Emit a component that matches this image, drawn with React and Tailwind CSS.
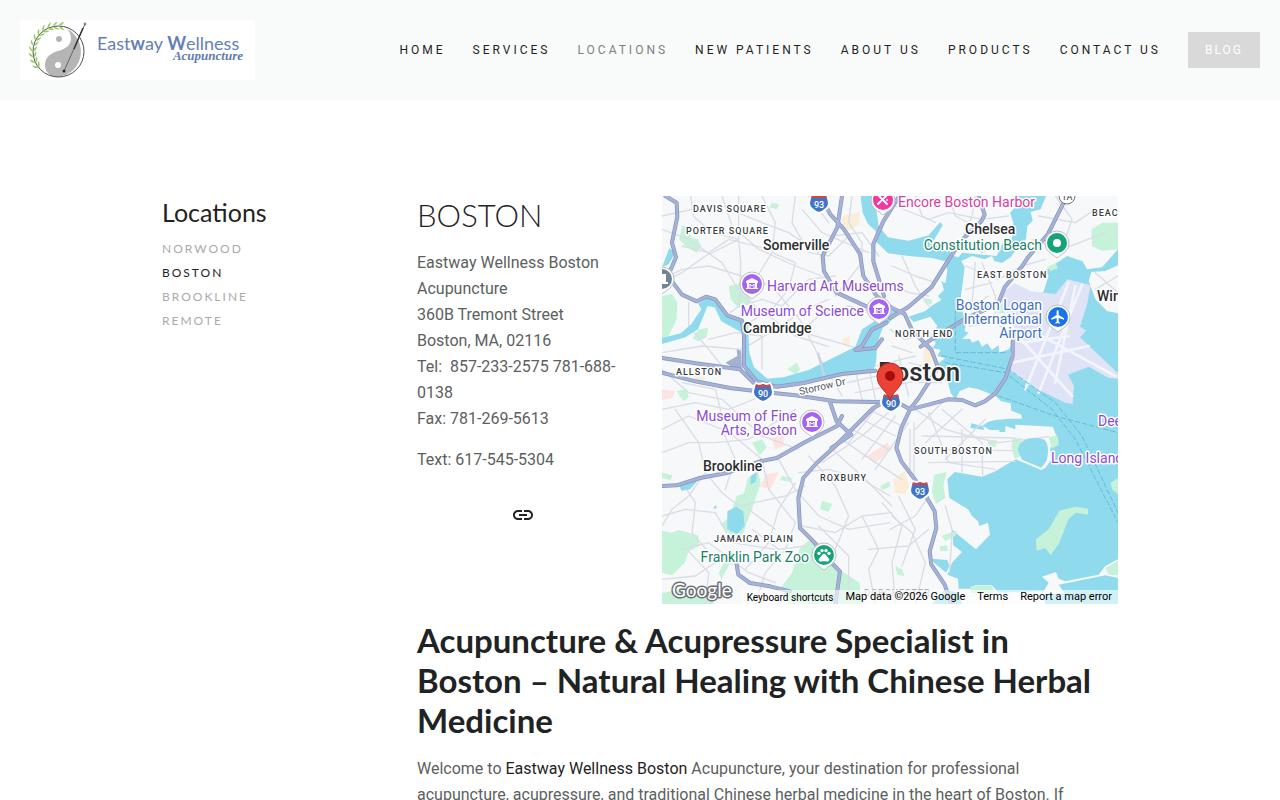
import { MdLink, MdFlight, MdPets, MdMuseum } from "react-icons/md";

const navItems = [
  "Home",
  "Services",
  "Locations",
  "New Patients",
  "About Us",
  "Products",
  "Contact Us",
];

const locations = ["Norwood", "Boston", "Brookline", "Remote"];

// The map geometry is drawn on a 1368 x 1224 grid and scaled down by three.
const land = [
  "M0 0H596L602 50 618 84 642 106 640 134 678 172 740 180 810 186 850 196 856 225 850 262 838 256 846 282 828 300 838 312 808 330 790 345 740 362 755 378 805 362 826 390 806 424 822 440 812 456 836 462 826 480 850 486 832 500 830 515 848 530 844 548 858 560 866 590 880 612 892 586 920 574 950 580 1000 600 1018 616 1046 622 1048 644 1078 656 1080 668 1040 668 1000 672 978 678 960 690 928 682 922 712 904 718 926 696 966 702 964 690 984 702 1012 702 1012 708 1030 708 1030 690 1060 700 1060 686 1172 692 1190 736 1164 756 1168 790 1150 816 1140 820 1066 788 1050 796 1000 826 960 842 878 828 856 850 862 906 918 940 930 960 948 976 952 990 978 980 984 1016 942 1060 888 1016 870 1000 874 1048 900 1068 870 1100 856 1136 888 1148 890 1178 930 1178 938 1168 990 1168 1010 1190 1140 1186 1150 1224H0Z",
  "M666 0L642 34 650 90 678 124 740 134 800 118 835 78 842 88 820 125 810 145 865 160 866 178 890 184 900 170 1004 180 1022 142 1050 126 1054 80 1044 50 1070 24 1066 0Z",
  "M1152 0L1136 40 1106 48 1112 74 1096 90 1092 130 1062 160 1046 184 1020 200 998 196 990 180 968 190 930 180 898 195 908 214 903 255 893 330 913 375 908 405 920 410 900 430 924 428 930 440 950 432 960 452 976 442 990 462 1010 448 1012 470 1040 460 1056 440 1140 300 1160 240 1150 224 1215 180 1262 196 1275 220 1320 214 1368 160V0Z",
  "M1368 208L1330 225 1288 228 1280 255 1300 310 1335 345 1368 352Z",
  "M1140 1142L1182 1128 1190 1148 1210 1156 1310 1136 1330 1110 1368 1090V1146L1330 1138 1190 1166 1210 1194H1140L1160 1160Z",
];

const airport =
  "M1010 300L1058 262 1108 286 1180 294 1216 250 1286 268 1276 322 1254 392 1272 404 1254 424 1368 532V548L1340 546 1280 512 1218 536 1236 570 1232 624 1210 620 1180 606 1118 576 1048 528 1044 474 1060 400Z";

const parks = [
  "M52 130L60 90 84 92 86 124 108 130 118 152 104 170 70 150Z",
  "M0 300L30 294 46 320 44 370 20 420 0 430Z",
  "M200 270L232 262 262 290 268 322 230 336 206 310Z",
  "M110 400L138 396 134 424 108 436 92 426Z",
  "M376 520L404 500 414 520 402 536Z",
  "M330 20L352 24 344 40 322 34Z",
  "M44 586L74 578 80 604 64 616Z",
  "M414 1056L440 1034 470 1040 500 1080 538 1124 592 1160 600 1224H380L356 1176 390 1130Z",
  "M258 846L288 826 296 862 280 910 262 960 240 1020 214 1030 190 1000 176 986 204 960 224 900 246 892Z",
  "M270 740L300 730 314 754 292 778Z",
  "M0 1004L30 1010 50 1002 108 1018 112 1050 80 1066 68 1100 30 1138 0 1130Z",
  "M170 1130L198 1080 208 1096 178 1150Z",
  "M0 1190L70 1180 150 1186 156 1224H0Z",
  "M0 830L32 838 26 852 0 846Z",
  "M360 840L392 846 384 858 354 852Z",
  "M480 914L510 924 500 948 474 940Z",
  "M654 870L682 856 684 872 660 882Z",
  "M816 836L854 828 844 870 850 906 822 924 810 890Z",
  "M1052 728L1080 726 1076 780 1058 790 1048 750Z",
  "M1160 724L1186 718 1190 746 1170 758Z",
  "M976 734L1004 732 1002 752 982 754Z",
  "M838 1020L884 1004 880 1020 850 1034Z",
  "M832 1052L854 1048 858 1064 836 1066Z",
  "M1330 1116L1368 1094V1138L1340 1136Z",
  "M1346 860L1368 846V894L1350 880Z",
  "M1122 1030L1160 1000 1192 944 1240 932 1278 938V956L1242 950 1220 968 1192 1040 1166 1078 1150 1056 1124 1064Z",
  "M1288 100L1320 80 1368 80V160L1320 164 1290 150Z",
  "M1156 214L1180 200 1188 216 1166 226Z",
  "M926 1170L990 1170 998 1190 926 1192Z",
  "M1000 320L1024 326 1030 352 1006 350Z",
  "M790 306L812 312 808 326 788 320Z",
  "M700 1110L720 1120 728 1140 706 1136Z",
];

const sand = [
  "M540 60L594 48 592 84 566 102 540 94Z",
  "M694 850L728 824 742 870 730 896 700 890Z",
  "M540 430L564 420 562 446 544 448Z",
  "M786 440L810 448 806 520 782 540Z",
  "M96 538L130 546 124 570 96 560Z",
];

const pinkBlocks = [
  "M614 780L676 740 690 760 640 800Z",
  "M330 724L366 716 364 752 338 760Z",
  "M294 872L312 834 350 828 326 880Z",
  "M0 580L40 586 30 606 0 612Z",
];

const water = [
  // Charles river and its basin
  "M0 214L22 156 40 170 20 205Z",
  "M0 426L56 412 88 384 118 340 108 322 132 308 154 310 176 330 204 362 244 372 258 386 262 470 276 514 316 548 364 544 440 522 580 452 600 400 650 368 676 348 700 340 714 350 680 380 662 396 646 440 642 500 632 530 560 530 430 566 330 580 280 566 250 530 240 410 200 388 178 376 158 334 136 330 128 352 108 400 70 424 0 444Z",
  "M196 946L222 932 244 946 248 990 226 1014 196 1000Z",
  "M266 840L284 828 282 856 266 866Z",
  "M50 866L86 850 106 856 84 880 58 884Z",
  "M1068 764C1068 730 1110 720 1144 730C1166 740 1160 800 1140 816L1080 792Z",
  "M808 1088L856 1092 862 1110 852 1130 816 1100Z",
  "M810 1224L850 1180 888 1190 900 1224Z",
  "M154 936L162 926 164 938Z",
];

const minorRoads = [
  "M86 0L94 60 150 110 230 130 236 200 232 330 204 350",
  "M0 60L90 40 180 30 300 80 380 110 470 170",
  "M0 100L80 130 180 200 240 300 400 420 500 452",
  "M180 0L210 90 290 160 400 210 480 240",
  "M230 0V130L130 180 60 230 20 250",
  "M300 0L340 80 330 170 280 250 230 300",
  "M400 0L390 80 440 170 500 180 560 120",
  "M420 40L480 110 620 170",
  "M238 330L300 310 360 330 440 250 520 240",
  "M330 170L400 200 380 280 330 340 260 380",
  "M80 320L80 390 140 460 180 510",
  "M0 250L60 220 140 210 240 240 330 270 420 380 470 480 540 600",
  "M60 150L140 170 200 130 320 160 460 140",
  "M260 400L360 390 460 420 580 455",
  "M140 430L220 410 300 420 300 520",
  "M0 470L120 450 240 460 340 400 430 340 500 310",
  "M400 420L470 360 560 330 640 350",
  "M440 0L500 80M510 120L600 110 650 180",
  "M570 0L560 80 600 140 600 200 520 300",
  "M0 520L80 590 180 610 300 720 410 760",
  "M60 560L160 580 190 700 300 790",
  "M0 640L100 620 200 640 300 600",
  "M0 700L80 660 180 700 220 790 190 880",
  "M40 640L110 740 130 830 80 900 30 940 0 990",
  "M0 770L80 740 160 740 260 730 400 640",
  "M130 830L180 890 230 930 370 900 430 870",
  "M60 860L100 920 90 1010 150 1080 230 1110",
  "M0 960L70 940 160 950 210 1040 340 1060",
  "M300 790L320 880 400 980 370 1060 310 1130 280 1224",
  "M350 790L400 880 470 960 560 1000 684 980",
  "M400 860L350 940 320 1040 250 1120",
  "M410 830L500 820 600 850 684 900",
  "M440 780L520 870 560 960 520 1060 510 1110",
  "M420 990L520 1010 600 960 690 950",
  "M480 800L600 720 690 640",
  "M510 760L600 840 690 930",
  "M540 730L640 800 720 850",
  "M570 700L680 760M600 670L700 720M620 640L720 690",
  "M560 740L640 640M600 790L700 660M640 820L740 680",
  "M470 990L560 1080 560 1224",
  "M600 960L650 1060 620 1120 640 1224",
  "M690 960L750 1010 790 1100 760 1224",
  "M620 1060L740 1050 800 1000",
  "M660 920L720 990 690 1100 700 1224",
  "M60 1060L140 1040 260 1130 340 1160",
  "M0 1150L100 1140 160 1100M80 1066L140 1130 130 1224",
  "M270 1000L350 1060 430 1050M260 940L340 1000",
  "M560 530L760 480M556 560L780 510M580 590L790 550",
  "M580 520L600 610M620 510L640 610M660 500L680 610M710 480L740 600",
  "M684 400L730 430 770 420M690 450L750 470M740 500L820 520M760 560L840 560",
  "M760 640L850 700 920 720 1010 740 1160 722",
  "M800 650L860 800 1000 820M840 640L960 740 962 838",
  "M780 720L1060 726M790 760L1052 764M800 800L1060 796M900 700V830",
  "M760 700L840 620M790 740L900 640M850 790L970 670",
  "M744 700V840M756 680V840",
  "M850 930L870 1000 868 1050 862 1130",
  "M690 210L760 240 820 260M680 260L740 290 800 300M720 180L760 270 800 330",
  "M700 30L800 70 860 50 960 70 1040 60",
  "M760 0L780 60 820 80M860 0L880 60 960 100 1040 110M940 0L930 60 890 160",
  "M900 130L960 170 1010 140M1130 60L1240 80 1300 40 1368 60",
  "M1180 0L1230 70 1200 160M1110 130L1200 160 1330 110",
  "M910 210L1010 250 1080 210 1150 190M960 200L1000 300 1000 360",
  "M910 280L990 260M910 340L980 300M940 200L930 330M920 390L1000 380 1040 410",
  "M1300 230L1368 290M1300 280L1368 240",
  "M684 1000L760 960 800 900M710 900L760 1000 720 1110",
];

const highways = [
  "M10 0L44 20 46 62 30 140 42 184 18 240 60 296 104 316 132 302 160 310 196 358 240 374 246 420 246 510 284 556 344 572 420 562 540 534 640 524",
  "M0 486L116 504 234 520 274 560",
  "M0 530L100 556 204 576 306 588 400 598 520 616 640 618 700 616 744 640 800 626 858 610 900 612 940 628 968 616 1000 592 1030 548 1052 480 1052 436",
  "M474 0L506 56 546 100 594 174 604 240 644 300 690 336 728 354 750 402 808 462 828 514 802 556 770 606 744 640 718 696 703 756 718 796 778 876 818 946 823 996 803 1066 808 1106 848 1166 868 1224",
  "M540 0L526 94 482 180 486 226 524 290 640 344",
  "M712 0L664 76 634 144 634 196 666 300",
  "M950 0L968 56 958 76 898 134 858 194 808 274 738 334 684 366",
  "M1208 14L1158 114 1098 184 1078 214 1028 274 1008 324 918 364 818 424 776 452",
  "M0 870L44 868 114 846 194 831 294 796 344 786 434 736 524 691 540 660",
  "M690 606L634 636 554 716 514 756 464 801 424 846 409 906 414 996 454 1036 514 1106 534 1126 520 1224",
  "M504 618L524 676 568 716 508 756",
  "M224 1106L229 1136 264 1161 324 1171 384 1186",
  "M674 380L630 400 600 450 580 462 640 456 660 430",
];

const runways = [
  "M1220 260L1090 580",
  "M1260 266L1130 590",
  "M1060 410L1230 600",
  "M1240 270L1180 560",
  "M1050 500L1280 450",
  "M1140 420L1360 540",
  "M1080 440L1220 420",
];

const districts = [
  ["DAVIS SQUARE", 31, 16],
  ["PORTER SQUARE", 24, 38],
  ["ALLSTON", 14, 179],
  ["NORTH END", 233, 141],
  ["EAST BOSTON", 315, 82],
  ["BEACHMONT", 430, 20],
  ["SOUTH BOSTON", 252, 258],
  ["ROXBURY", 158, 285],
  ["JAMAICA PLAIN", 52, 346],
];

const towns = [
  ["Somerville", 101, 54],
  ["Cambridge", 81, 137],
  ["Chelsea", 303, 38],
  ["Winthrop", 435, 105],
  ["Brookline", 41, 275],
];

const purple = "#8a4bd3";
const places = [
  { text: "Harvard Art Museums", x: 105, y: 95, color: purple },
  { text: "Museum of Science", x: 202, y: 120, color: purple, end: true },
  { text: "Museum of Fine", x: 135, y: 225, color: purple, end: true },
  { text: "Arts, Boston", x: 135, y: 239, color: purple, end: true },
  { text: "Deer Island", x: 436, y: 230, color: purple },
  { text: "Long Island", x: 389, y: 267, color: purple },
  { text: "Encore Boston Harbor", x: 236, y: 11, color: "#d6409f" },
  { text: "Constitution Beach", x: 380, y: 54, color: "#188064", end: true },
  { text: "Franklin Park Zoo", x: 147, y: 366, color: "#188064", end: true },
  { text: "Boston Logan", x: 380, y: 114, color: "#3f6fc4", end: true },
  { text: "International", x: 380, y: 128, color: "#3f6fc4", end: true },
  { text: "Airport", x: 380, y: 142, color: "#3f6fc4", end: true },
];

function Lines({ paths, color, width, dash }) {
  return paths.map((d) => (
    <path
      key={d}
      d={d}
      fill="none"
      stroke={color}
      strokeWidth={width}
      strokeDasharray={dash}
      strokeLinejoin="round"
      strokeLinecap="round"
    />
  ));
}

function Areas({ paths, color }) {
  return paths.map((d) => <path key={d} d={d} fill={color} />);
}

function Pin({ x, y, color, children }) {
  return (
    <g transform={`translate(${x} ${y})`}>
      <path
        d="M0 15C-3 12 -12 9 -12 0A12 12 0 0 1 12 0C12 9 3 12 0 15Z"
        fill="#fff"
        stroke="#b9bec8"
        strokeWidth="1"
      />
      <circle r="10" fill={color} />
      {children}
    </g>
  );
}

function MuseumPin({ x, y }) {
  return (
    <Pin x={x} y={y} color="#a463f2">
      <path
        d="M0 -6L6 -3V-1H-6V-3ZM-5 -1H-3V4H-5ZM3 -1H5V4H3ZM-6 4H6V5H-6Z"
        fill="#fff"
      />
      <path d="M-2 4V0L0 2L2 0V4" stroke="#fff" strokeWidth="1" fill="none" />
    </Pin>
  );
}

function Shield({ x, y, number }) {
  return (
    <g transform={`translate(${x} ${y})`}>
      <path
        d="M-7 -9Q-4 -7 0 -9Q4 -7 7 -9Q13 2 7 6Q4 9 0 10Q-4 9 -7 6Q-13 2 -7 -9Z"
        fill="#3f74c6"
        stroke="#fff"
        strokeWidth="2"
      />
      <path d="M-7 -8Q-4 -6 0 -8Q4 -6 7 -8L8 -5H-8Z" fill="#d8453e" />
      <text y="5" fontSize="9" fontWeight="500" fill="#fff" textAnchor="middle">
        {number}
      </text>
    </g>
  );
}

function MapDrawing() {
  return (
    <svg
      viewBox="0 0 456 408"
      preserveAspectRatio="xMidYMid slice"
      className="block h-full w-full font-['Roboto',sans-serif]"
      role="img"
      aria-label="Map of Boston"
    >
      <g transform="scale(0.333333)">
        <rect width="1368" height="1224" fill="#90daee" />
        <Areas paths={land} color="#f7f8f9" />
        <Areas paths={[airport]} color="#dfe3f5" />
        <Areas paths={sand} color="#fbeed9" />
        <Areas paths={pinkBlocks} color="#fce4e2" />
        <Areas paths={parks} color="#c5f2d8" />
        <Lines paths={minorRoads} color="#d9dde6" width="4" />
        <Areas paths={water} color="#90daee" />
        <Lines paths={runways} color="#f3f5fc" width="8" />
        <Lines
          paths={[
            "M880 340V470H1030",
            "M840 480L1040 520 1180 620 1260 720 1368 950",
            "M850 500L1030 530 1170 640 1240 730 1368 980",
            "M1010 600L1180 660 1368 710",
          ]}
          color="#62bcd9"
          width="3"
          dash="14 8"
        />
        <path
          d="M468 470L486 540"
          fill="none"
          stroke="#c7d3e6"
          strokeWidth="7"
        />
        <path
          d="M1060 786L1138 820 1156 796"
          fill="none"
          stroke="#f7f8f9"
          strokeWidth="5"
        />
        <path d="M190 500L226 480 224 460 238 464 240 530Z" fill="#a3b0d2" />
        <Lines paths={highways} color="#8494be" width="12" />
        <Lines paths={highways} color="#a6b3d6" width="8" />
      </g>

      <g
        stroke="#fff"
        strokeWidth="3"
        strokeLinejoin="round"
        paintOrder="stroke"
      >
        <g fontSize="9" fontWeight="500" letterSpacing="1" fill="#3a3d42">
          {districts.map(([text, x, y]) => (
            <text key={text} x={x} y={y}>
              {text}
            </text>
          ))}
          <text x="202" y="400" fill="#a9adb3" strokeWidth="0">
            DORCHESTER
          </text>
        </g>
        <g fontSize="14" fontWeight="500" fill="#2c2e31">
          {towns.map(([text, x, y]) => (
            <text key={text} x={x} y={y}>
              {text}
            </text>
          ))}
          <text x="216" y="185" fontSize="26">
            Boston
          </text>
        </g>
        <g fontSize="14">
          {places.map(({ text, x, y, color, end }) => (
            <text
              key={text}
              x={x}
              y={y}
              fill={color}
              textAnchor={end ? "end" : "start"}
            >
              {text}
            </text>
          ))}
        </g>
        <text
          fontSize="10"
          fill="#4b5563"
          transform="translate(138 199) rotate(-13)"
        >
          Storrow Dr
        </text>
      </g>

      <Shield x={157} y={7} number="93" />
      <Shield x={101} y={196} number="90" />
      <Shield x={229} y={206} number="90" />
      <Shield x={258} y={294} number="93" />
      <g transform="translate(405 0)">
        <circle r="8" fill="#fff" stroke="#6b7280" strokeWidth="1" />
        <text y="4" fontSize="9" fill="#3a3d42" textAnchor="middle">
          1A
        </text>
      </g>

      <MuseumPin x={90} y={88} />
      <MuseumPin x={217} y={113} />
      <MuseumPin x={150} y={226} />
      <Pin x={221} y={4} color="#f538a0">
        <path
          d="M-5 -5L4 4M4 -5L-5 4"
          stroke="#fff"
          strokeWidth="2"
          strokeLinecap="round"
        />
        <circle cx="4" cy="0" r="1" fill="#fff" />
      </Pin>
      <Pin x={395} y={47} color="#17a37a">
        <circle r="4" fill="#fff" />
      </Pin>
      <Pin x={396} y={121} color="#1a73e8">
        <MdFlight x={-8} y={-8} size={16} color="#fff" />
      </Pin>
      <Pin x={162} y={359} color="#17a37a">
        <MdPets x={-8} y={-8} size={16} color="#fff" />
      </Pin>
      <Pin x={0} y={83} color="#6f8794">
        <path d="M-5 4H6M3 3V-4H1V3" stroke="#fff" strokeWidth="2" fill="none" />
      </Pin>

      <path
        d="M228 205C227 196 215 192 215 180A13 13 0 0 1 241 180C241 192 229 196 228 205Z"
        fill="#ea4335"
        stroke="#c5221f"
        strokeWidth="1"
      />
      <circle cx="228" cy="180" r="5" fill="#a50e0e" />

      <text
        x="10"
        y="401"
        fontSize="19"
        fontFamily="Lato, sans-serif"
        fill="#fff"
        stroke="#6b6f75"
        strokeWidth="3"
        strokeLinejoin="round"
        paintOrder="stroke"
      >
        Google
      </text>
    </svg>
  );
}

// Degrees from the top of the circle, one pair of leaves each
const leafAngles = [0, -13, -26, -39, -52, -65, -78, -91, -104, -117, -130];

function Logo() {
  return (
    <svg width="235" height="60" viewBox="0 0 235 60" className="bg-white">
      <path
        d="M42 7A25.5 25.5 0 0 1 38 57C29 57 25 51 25 45C25 37 31 33 38 31C46 29 51 25 51 18C51 12 47 8 42 7Z"
        fill="#b5b5b5"
      />
      <circle
        cx="38.5"
        cy="31.5"
        r="25.5"
        fill="none"
        stroke="#4b504c"
        strokeWidth="1"
      />
      <circle cx="39" cy="19" r="3" fill="#b5b5b5" />
      <circle cx="38" cy="45" r="3" fill="#fff" />
      {leafAngles.map((angle) => (
        <g
          key={angle}
          transform={`rotate(${angle} 38.5 31.5) translate(38.5 6) rotate(90)`}
          fill="#93c95b"
        >
          <path d="M0 0Q-4 -2 -4 -6Q-1 -4 0 0Z" />
          <path d="M0 0Q1 -4 4 -6Q4 -2 0 0Z" />
        </g>
      ))}
      <path d="M65 4L44 51" stroke="#666" strokeWidth="1" />
      <path d="M63 8L54 29" stroke="#333" strokeWidth="1.5" />
      <circle cx="65" cy="4" r="1" fill="#fff" stroke="#666" />
      <circle cx="44" cy="51" r="1.5" fill="#222" />
      <text
        x="77"
        y="30"
        fontSize="18"
        fontFamily="Lato, sans-serif"
        fill="#6480b2"
      >
        East<tspan fontWeight="700">w</tspan>ay{" "}
        <tspan fontWeight="700">W</tspan>ellness
      </text>
      <text
        x="223"
        y="40"
        fontSize="13"
        fontFamily="'Liberation Serif', serif"
        fontStyle="italic"
        fontWeight="700"
        textAnchor="end"
        fill="#5f7cab"
      >
        Acupuncture
      </text>
    </svg>
  );
}

export default function App() {
  return (
    <div className="h-screen overflow-hidden bg-white font-['Roboto',sans-serif] text-[#5c5f60]">
      <header className="flex h-[100px] items-center justify-between bg-[#f9fbfa] px-5">
        <a href="#home" aria-label="Eastway Wellness Acupuncture">
          <Logo />
        </a>
        <nav className="flex items-center gap-[27px] text-xs tracking-[3px] whitespace-nowrap text-[#1f2324] uppercase">
          {navItems.map((item) => (
            <a
              key={item}
              href="#"
              className={item === "Locations" ? "text-[#7c7f80]" : ""}
            >
              {item}
            </a>
          ))}
          <a
            href="#blog"
            className="flex h-9 w-[72px] items-center justify-center bg-[#d9d9d9] tracking-[2px] text-white"
          >
            Blog
          </a>
        </nav>
      </header>

      <div className="mx-auto flex max-w-[956px] pt-24">
        <aside className="w-[255px] shrink-0 font-['Lato',sans-serif]">
          <h2 className="text-[25px] leading-8 text-[#1f2324]">Locations</h2>
          <ul className="mt-[9px] text-xs leading-6 tracking-[2px] text-[#a9abab] uppercase">
            {locations.map((item) => (
              <li key={item}>
                <a
                  href="#"
                  className={item === "Boston" ? "text-[#1f2324]" : ""}
                >
                  {item}
                </a>
              </li>
            ))}
          </ul>
        </aside>

        <main className="min-w-0 flex-1">
          <div className="grid grid-cols-[211fr_456fr] gap-[34px]">
            <section>
              <h1 className="font-['Lato',sans-serif] text-[31px] leading-[38px] font-light text-[#1f2324]">
                BOSTON
              </h1>
              <p className="mt-4 leading-[26px] whitespace-pre-line">
                {
                  "Eastway Wellness Boston Acupuncture\n360B Tremont Street\nBoston, MA, 02116\nTel:\u00a0 857-233-2575 781-688-0138\nFax: 781-269-5613"
                }
              </p>
              <p className="mt-[15px] leading-[26px]">Text: 617-545-5304</p>
              <a
                href="#"
                aria-label="Link"
                className="mt-[30px] flex justify-center text-[#1f2324]"
              >
                <MdLink size={24} />
              </a>
            </section>

            <div className="relative h-[408px] overflow-hidden">
              <MapDrawing />
              <div className="absolute right-0 bottom-0 flex h-[14px] items-center gap-3 bg-white/60 px-[6px] text-[11px] whitespace-nowrap text-black">
                <button type="button" className="text-[10px]">
                  Keyboard shortcuts
                </button>
                <span>Map data ©2026 Google</span>
                <a href="#">Terms</a>
                <a href="#">Report a map error</a>
              </div>
            </div>
          </div>

          <h2 className="mt-4 font-['Lato',sans-serif] text-[33px] leading-10 font-bold text-[#1f2324]">
            Acupuncture &amp; Acupressure Specialist in Boston – Natural Healing
            with Chinese Herbal Medicine
          </h2>
          <p className="mt-4 pr-6 leading-[26px]">
            Welcome to{" "}
            <a href="#" className="text-[#1f2324]">
              Eastway Wellness Boston
            </a>{" "}
            Acupuncture, your destination for professional acupuncture,
            acupressure, and traditional Chinese herbal medicine in the heart of
            Boston. If
          </p>
        </main>
      </div>
    </div>
  );
}
